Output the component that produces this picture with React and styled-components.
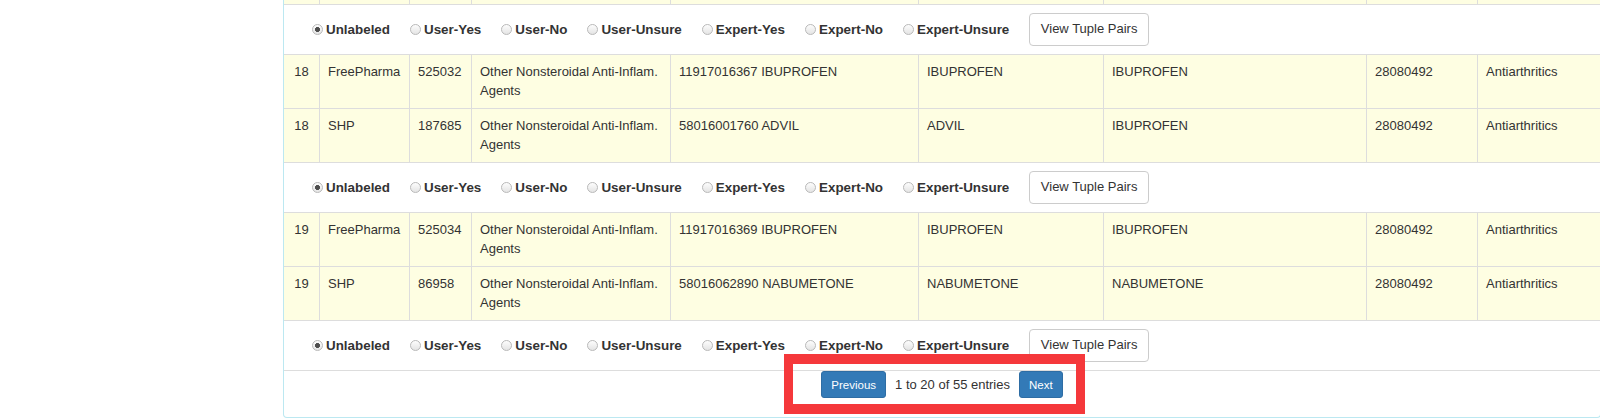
import React from "react";
import styled, { createGlobalStyle } from "styled-components";

const GlobalStyle = createGlobalStyle`
  html, body {
    margin: 0;
    padding: 0;
    background: #fff;
    overflow: hidden;
  }
  body {
    font-family: "Liberation Sans", Arial, Helvetica, sans-serif;
    font-size: 13px;
    color: #333;
  }
  * {
    box-sizing: border-box;
  }
`;

const Page = styled.div`
  padding-left: 283px;
  height: 418px;
`;

const Panel = styled.div`
  width: calc(100% + 1px);
  border: 1px solid #bce8f1;
  border-top: 0;
  border-radius: 0 0 4px 4px;
  background: #fff;
`;

const DataRow = styled.div`
  display: grid;
  grid-template-columns: 36px 90px 62px 199px 248px 185px 263px 111px 1fr;
  background: #fefee2;
  border-bottom: 1px solid #ddd;
  height: ${({ $stub }) => ($stub ? "5px" : "auto")};
`;

const Cell = styled.div`
  padding: ${({ $stub }) => ($stub ? "0" : "8px 8px")};
  line-height: 18.5px;
  border-right: 1px solid #ddd;
  text-align: ${({ $center }) => ($center ? "center" : "left")};

  &:last-child {
    border-right: 0;
  }
`;

const LabelRow = styled.div`
  display: flex;
  align-items: center;
  gap: 20px;
  padding: 8px 28px;
  background: #fff;
  border-bottom: 1px solid #ddd;
`;

const RadioLabel = styled.label`
  display: inline-flex;
  align-items: center;
  gap: 3px;
  font-weight: bold;
  font-size: 13.4px;
  line-height: 18px;
`;

const Radio = styled.input.attrs({ type: "radio" })`
  appearance: none;
  margin: 0;
  width: 11px;
  height: 11px;
  border-radius: 50%;
  border: 1px solid #b9b9b9;
  background: linear-gradient(#fdfdfd, #e4e4e4);

  &:checked {
    background: radial-gradient(circle, #4d4d4d 0 2.2px, transparent 2.8px),
      linear-gradient(#fdfdfd, #e4e4e4);
  }
`;

const OutlineButton = styled.button`
  font-family: inherit;
  font-size: 13px;
  line-height: 18.5px;
  height: 33px;
  padding: 0 10.5px;
  color: #333;
  background: #fff;
  border: 1px solid #ccc;
  border-radius: 4px;
`;

const Footer = styled.div`
  height: 46px;
  display: flex;
  justify-content: center;
  align-items: flex-start;
`;

const Pagination = styled.div`
  position: relative;
  display: flex;
  align-items: center;
  gap: 9px;
`;

const PageButton = styled.button`
  font-family: inherit;
  font-size: 11.5px;
  height: 27px;
  padding: 0 9px;
  color: #fff;
  background: #337ab7;
  border: 1px solid #2e6da4;
  border-radius: 3px;
`;

const PageInfo = styled.span`
  font-size: 13px;
  line-height: 27px;
`;

const Highlight = styled.div`
  position: absolute;
  inset: -17px -22px -16px -37px;
  border-style: solid;
  border-color: #f5383b;
  border-width: 10px 9px;
  pointer-events: none;
`;

const labels = [
  "Unlabeled",
  "User-Yes",
  "User-No",
  "User-Unsure",
  "Expert-Yes",
  "Expert-No",
  "Expert-Unsure",
];

const pairs = [
  [
    ["18", "FreePharma", "525032", "Other Nonsteroidal Anti-Inflam. Agents", "11917016367 IBUPROFEN", "IBUPROFEN", "IBUPROFEN", "28080492", "Antiarthritics"],
    ["18", "SHP", "187685", "Other Nonsteroidal Anti-Inflam. Agents", "58016001760 ADVIL", "ADVIL", "IBUPROFEN", "28080492", "Antiarthritics"],
  ],
  [
    ["19", "FreePharma", "525034", "Other Nonsteroidal Anti-Inflam. Agents", "11917016369 IBUPROFEN", "IBUPROFEN", "IBUPROFEN", "28080492", "Antiarthritics"],
    ["19", "SHP", "86958", "Other Nonsteroidal Anti-Inflam. Agents", "58016062890 NABUMETONE", "NABUMETONE", "NABUMETONE", "28080492", "Antiarthritics"],
  ],
];

const LabelBar = ({ name }) => (
  <LabelRow>
    {labels.map((label, i) => (
      <RadioLabel key={label}>
        <Radio name={name} defaultChecked={i === 0} />
        {label}
      </RadioLabel>
    ))}
    <OutlineButton>View Tuple Pairs</OutlineButton>
  </LabelRow>
);

const Row = ({ cells }) => (
  <DataRow>
    {cells.map((c, i) => (
      <Cell key={i} $center={i === 0}>
        {c}
      </Cell>
    ))}
  </DataRow>
);

export default function App() {
  return (
    <>
      <GlobalStyle />
      <Page>
        <Panel>
          <DataRow $stub>
            {Array.from({ length: 9 }).map((_, i) => (
              <Cell key={i} $stub />
            ))}
          </DataRow>
          <LabelBar name="pair-17" />
          {pairs.map((pair, i) => (
            <React.Fragment key={i}>
              <Row cells={pair[0]} />
              <Row cells={pair[1]} />
              <LabelBar name={`pair-${18 + i}`} />
            </React.Fragment>
          ))}
          <Footer>
            <Pagination>
              <PageButton>Previous</PageButton>
              <PageInfo>1 to 20 of 55 entries</PageInfo>
              <PageButton>Next</PageButton>
              <Highlight />
            </Pagination>
          </Footer>
        </Panel>
      </Page>
    </>
  );
}
